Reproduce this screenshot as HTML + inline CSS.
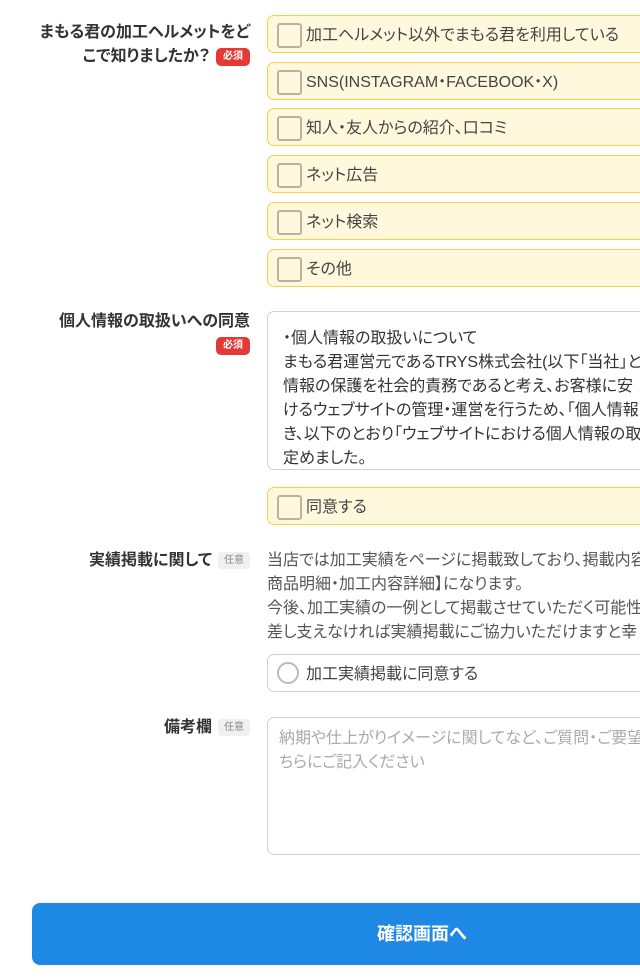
<!DOCTYPE html>
<html><head><meta charset="utf-8"><style>
*{box-sizing:border-box;margin:0;padding:0}
body{width:640px;height:980px;overflow:hidden;background:#fff;font-family:"Liberation Sans","Noto Sans CJK JP",sans-serif;color:#333;font-size:16px;position:relative;font-feature-settings:"palt"}
.a{position:absolute}
.lbl{right:390px;text-align:right;font-weight:bold;font-size:16px;line-height:24px;color:#333}
.req{display:inline-block;background:#e53935;color:#fff;font-size:10px;font-weight:bold;border-radius:5px;padding:0 7px;line-height:18px;vertical-align:2px;margin-left:6px}
.opt{display:inline-block;background:#f0f0f0;color:#888;font-size:10px;border-radius:4px;padding:0 6px;line-height:17px;vertical-align:2px;margin-left:6px;font-weight:normal}
.ck{left:267px;width:400px;height:38px;background:#fff8dd;border:1px solid #f5d24a;border-radius:7px;line-height:36px;padding-top:2px;padding-left:38px;color:#444}
.ck:before{content:"";position:absolute;left:9px;top:7px;width:21px;height:21px;border:2px solid #bbb2a0;border-radius:3px;background:#fff8dd}
.box{left:267px;width:400px;border:1px solid #d0d0d0;border-radius:7px;line-height:24px}
</style></head><body>
<div class="a lbl" style="top:21px;width:240px">まもる君の加工ヘルメットをど<br>こで知りましたか？<span class="req">必須</span></div>
<div class="a ck" style="top:15px">加工ヘルメット以外でまもる君を利用している</div>
<div class="a ck" style="top:62px">SNS(INSTAGRAM・FACEBOOK・X)</div>
<div class="a ck" style="top:108px">知人・友人からの紹介、口コミ</div>
<div class="a ck" style="top:155px">ネット広告</div>
<div class="a ck" style="top:202px">ネット検索</div>
<div class="a ck" style="top:249px">その他</div>

<div class="a lbl" style="top:310px;width:240px">個人情報の取扱いへの同意<br><span class="req">必須</span></div>
<div class="a box" style="top:311px;height:159px;padding:15px 15px;color:#333;overflow:hidden;white-space:nowrap">・個人情報の取扱いについて<br>まもる君運営元であるTRYS株式会社(以下「当社」と<br>情報の保護を社会的責務であると考え、お客様に安<br>けるウェブサイトの管理・運営を行うため、「個人情報<br>き、以下のとおり「ウェブサイトにおける個人情報の取<br>定めました。</div>
<div class="a ck" style="top:487px">同意する</div>

<div class="a lbl" style="top:549px;width:240px">実績掲載に関して<span class="opt">任意</span></div>
<div class="a" style="left:267px;top:549px;line-height:24px;color:#555;white-space:nowrap">当店では加工実績をページに掲載致しており、掲載内容<br>商品明細・加工内容詳細】になります。<br>今後、加工実績の一例として掲載させていただく可能性<br>差し支えなければ実績掲載にご協力いただけますと幸</div>
<div class="a box" style="top:654px;height:38px;padding-left:38px;padding-top:2px;line-height:36px;color:#444">加工実績掲載に同意する<span style="position:absolute;left:9px;top:7px;width:22px;height:22px;border:2px solid #bbb;border-radius:50%"></span></div>

<div class="a lbl" style="top:716px;width:240px">備考欄<span class="opt">任意</span></div>
<div class="a box" style="top:717px;height:138px;padding:9px 11px;color:#aaa;white-space:nowrap;overflow:hidden">納期や仕上がりイメージに関してなど、ご質問・ご要望<br>ちらにご記入ください</div>

<div class="a" style="left:32px;top:903px;width:640px;height:62px;background:#1e88e5;border-radius:8px;color:#fff;font-weight:bold;font-size:18px;line-height:62px;padding-left:345px">確認画面へ</div>
</body></html>
